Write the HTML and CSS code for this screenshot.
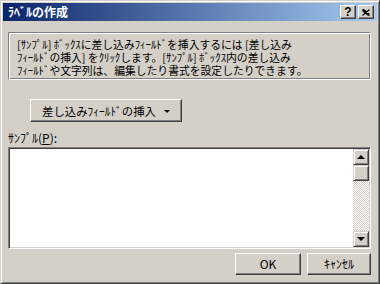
FILE: index.html
```html
<!DOCTYPE html>
<html lang="ja">
<head>
	<meta charset="utf-8">
	<title>ﾗﾍﾞﾙの作成</title>
	<link rel="stylesheet" href="styles.css">
</head>
<body>
	<div class="dialog">
		<div class="titlebar">
			<span class="title">ﾗﾍﾞﾙの作成</span>
			<div class="caption-btns">
				<button class="cap-btn help">?</button>
				<button class="cap-btn close">
					<svg width="8" height="7" viewBox="0 0 8 7"><path d="M0.5 0.5 L7.5 6.5 M1.5 0.5 L7.5 5.5 M0.5 1.5 L6.5 6.5 M7.5 0.5 L0.5 6.5" stroke="#000" stroke-width="1.2" fill="none"/></svg>
				</button>
			</div>
		</div>

		<div class="client">
			<div class="info">
				<div class="line">[ｻﾝﾌﾟﾙ] ﾎﾞｯｸｽに差し込みﾌｨｰﾙﾄﾞを挿入するには [差し込み</div>
				<div class="line">ﾌｨｰﾙﾄﾞの挿入] をｸﾘｯｸします。[ｻﾝﾌﾟﾙ] ﾎﾞｯｸｽ内の差し込み</div>
				<div class="line">ﾌｨｰﾙﾄﾞや文字列は、編集したり書式を設定したりできます。</div>
			</div>

			<button class="btn insert-btn">差し込みﾌｨｰﾙﾄﾞの挿入<span class="drop"></span></button>

			<div class="label">ｻﾝﾌﾟﾙ(<u>P</u>):</div>

			<div class="sample">
				<div class="sample-text"></div>
				<div class="scrollbar">
					<div class="sb-btn"><span class="arrow up"></span></div>
					<div class="sb-btn thumb"></div>
					<div class="sb-track"></div>
					<div class="sb-btn"><span class="arrow down"></span></div>
				</div>
			</div>

			<div class="actions">
				<button class="btn ok">OK</button>
				<button class="btn cancel">ｷｬﾝｾﾙ</button>
			</div>
		</div>
	</div>
</body>
</html>
```

FILE: styles.css
```css
* {
	box-sizing: border-box;
}

body {
	margin: 0;
	background: #d4d0c8;
	font-family: "Noto Sans CJK JP", "Liberation Sans", sans-serif;
	font-size: 12px;
	color: #000;
}

.dialog {
	width: 380px;
	height: 284px;
	display: flex;
	flex-direction: column;
	padding: 2px;
	background: #d4d0c8;
	border: 1px solid;
	border-color: #d4d0c8 #404040 #404040 #d4d0c8;
	box-shadow: inset 1px 1px #fff, inset -1px -1px #808080;
}

.titlebar {
	height: 18px;
	display: flex;
	align-items: center;
	justify-content: space-between;
	padding: 0 3px 0 5px;
	background: linear-gradient(to right, #0a246a, #a6caf0);
	color: #fff;
	font-weight: bold;
	line-height: 18px;
}

.caption-btns {
	display: flex;
	gap: 2px;
}

.cap-btn {
	width: 16px;
	height: 14px;
	padding: 0;
	display: flex;
	align-items: center;
	justify-content: center;
	background: #d4d0c8;
	border: 1px solid;
	border-color: #fff #404040 #404040 #fff;
	box-shadow: inset -1px -1px #808080;
	font-family: "Liberation Sans", sans-serif;
	font-weight: bold;
	font-size: 12px;
	line-height: 12px;
	color: #000;
}

.client {
	flex: 1;
	display: flex;
	flex-direction: column;
	align-items: flex-start;
	padding: 11px 6px 0 5px;
}

.info {
	align-self: stretch;
	height: 48px;
	padding: 5px 0 0 8px;
	border: 1px solid;
	border-color: #808080 #fff #fff #808080;
	box-shadow: inset 1px 1px #fff, inset -1px -1px #808080;
	font-size: 10.8px;
	white-space: nowrap;
	overflow: hidden;
}

.line {
	height: 13px;
	line-height: 13px;
}

.btn {
	font: inherit;
	color: #000;
	background: #d4d0c8;
	border: 1px solid;
	border-color: #fff #404040 #404040 #fff;
	box-shadow: inset -1px -1px #808080;
	padding: 0;
	height: 22px;
	line-height: 18px;
}

.insert-btn {
	margin: 19px 0 0 22px;
	width: 152px;
	height: 23px;
	display: flex;
	align-items: center;
	justify-content: center;
	gap: 8px;
	font-size: 11.4px;
}

.drop {
	width: 0;
	height: 0;
	border-left: 3px solid transparent;
	border-right: 3px solid transparent;
	border-top: 3px solid #000;
	margin-top: 1px;
}

.label {
	margin-top: 9px;
	height: 13px;
	line-height: 13px;
}

.sample {
	align-self: stretch;
	margin-top: 3px;
	height: 102px;
	display: flex;
	padding: 1px;
	background: #fff;
	border: 1px solid;
	border-color: #808080 #fff #fff #808080;
	box-shadow: inset 1px 1px #404040, inset -1px -1px #d4d0c8;
}

.sample-text {
	flex: 1;
}

.scrollbar {
	width: 16px;
	display: flex;
	flex-direction: column;
}

.sb-btn {
	height: 16px;
	display: flex;
	align-items: center;
	justify-content: center;
	background: #d4d0c8;
	border: 1px solid;
	border-color: #d4d0c8 #404040 #404040 #d4d0c8;
	box-shadow: inset 1px 1px #fff, inset -1px -1px #808080;
}

.sb-track {
	flex: 1;
	background: repeating-conic-gradient(#fff 0 25%, #d4d0c8 0 50%) 0 0 / 2px 2px;
}

.arrow {
	width: 0;
	height: 0;
	border-left: 4px solid transparent;
	border-right: 4px solid transparent;
}

.arrow.up {
	border-bottom: 4px solid #000;
}

.arrow.down {
	border-top: 4px solid #000;
}

.actions {
	align-self: stretch;
	display: flex;
	justify-content: flex-end;
	gap: 6px;
	margin-top: 4px;
}

.ok {
	width: 66px;
}

.cancel {
	width: 64px;
}
```
